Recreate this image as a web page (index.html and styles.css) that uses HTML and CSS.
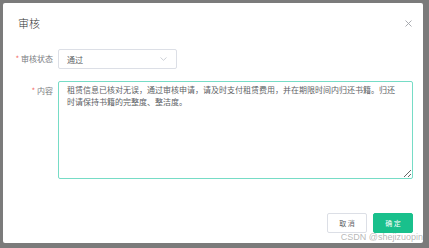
FILE: index.html
```html
<!DOCTYPE html>
<html lang="zh-CN">

<head>
    <meta charset="UTF-8">
    <meta name="viewport" content="width=device-width, initial-scale=1.0">
    <title>审核</title>
    <link rel="stylesheet" href="styles.css">
</head>

<body>
    <div class="page">
        <div class="dialog">
            <div class="dialog-header">
                <span class="dialog-title">审核</span>
                <span class="dialog-close">
                    <svg width="7" height="7" viewBox="0 0 7 7">
                        <path d="M0.5 0.5 L6.5 6.5 M6.5 0.5 L0.5 6.5" stroke="#a0a3a8" stroke-width="0.9" fill="none" />
                    </svg>
                </span>
            </div>

            <div class="dialog-body">
                <div class="form-row">
                    <label class="form-label"><span class="required">*</span> 审核状态</label>
                    <div class="select">
                        <span class="select-value">通过</span>
                        <svg class="select-arrow" width="7" height="4" viewBox="0 0 7 4">
                            <path d="M0.5 0.5 L3.5 3.3 L6.5 0.5" stroke="#c0c4cc" stroke-width="0.8" fill="none" />
                        </svg>
                    </div>
                </div>

                <div class="form-row form-row-top">
                    <label class="form-label"><span class="required">*</span> 内容</label>
                    <textarea class="textarea">租赁信息已核对无误，通过审核申请，请及时支付租赁费用，并在期限时间内归还书籍。归还时请保持书籍的完整度、整洁度。</textarea>
                </div>
            </div>

            <div class="dialog-footer">
                <button class="btn">取 消</button>
                <button class="btn btn-primary">确 定</button>
            </div>
            <div class="watermark">CSDN @shejizuopin</div>
        </div>
    </div>
</body>

</html>
```

FILE: styles.css
```css
body {
    margin: 0;
    background-color: #7b7b7b;
    font-family: "Noto Sans CJK SC", "Noto Sans", sans-serif;
}

.page {
    padding: 3px 6px 5px 3px;
}

.dialog {
    position: relative;
    height: 240px;
    background-color: #fff;
    border-radius: 2px;
    display: flex;
    flex-direction: column;
}

.dialog-header {
    display: flex;
    justify-content: space-between;
    align-items: center;
    padding: 12px 11px 0 15px;
    height: 16px;
}

.dialog-title {
    font-size: 11px;
    font-weight: 300;
    color: #303133;
    line-height: 16px;
}

.dialog-close {
    display: flex;
}

.dialog-body {
    padding: 18px 10px 0 0;
}

.form-row {
    display: flex;
    align-items: center;
    margin-bottom: 12px;
}

.form-row-top {
    align-items: flex-start;
}

.form-label {
    width: 50px;
    padding-right: 5px;
    text-align: right;
    font-size: 8px;
    color: #7a7d82;
    line-height: 20px;
}

.required {
    color: #f56c6c;
}

.select {
    width: 119px;
    height: 20px;
    box-sizing: border-box;
    border: 1px solid #dcdfe6;
    border-radius: 2px;
    display: flex;
    align-items: center;
    justify-content: space-between;
    padding: 0 9px 0 8px;
}

.select-value {
    font-size: 8px;
    color: #606266;
}

.textarea {
    width: 355px;
    height: 98px;
    box-sizing: border-box;
    border: 1px solid #76dcc6;
    border-radius: 2px;
    padding: 2px 14px 2px 8px;
    font-family: "Noto Sans CJK SC", "Noto Sans", sans-serif;
    font-size: 8px;
    line-height: 12px;
    color: #606266;
    resize: vertical;
    outline: none;
}

.dialog-footer {
    display: flex;
    justify-content: flex-end;
    gap: 6px;
    padding: 22px 10px 0 0;
}

.btn {
    width: 40px;
    height: 20px;
    border: 1px solid #dcdfe6;
    border-radius: 2px;
    background-color: #fff;
    color: #606266;
    font-family: "Noto Sans CJK SC", "Noto Sans", sans-serif;
    font-size: 7px;
    padding: 0;
    cursor: pointer;
}

.btn-primary {
    background-color: #19c08c;
    border-color: #19c08c;
    color: #fff;
}

.watermark {
    position: absolute;
    right: 0;
    bottom: 2px;
    font-family: "Liberation Sans", Arial, sans-serif;
    font-size: 9px;
    line-height: 8px;
    color: rgba(160, 160, 160, 0.75);
}
```
